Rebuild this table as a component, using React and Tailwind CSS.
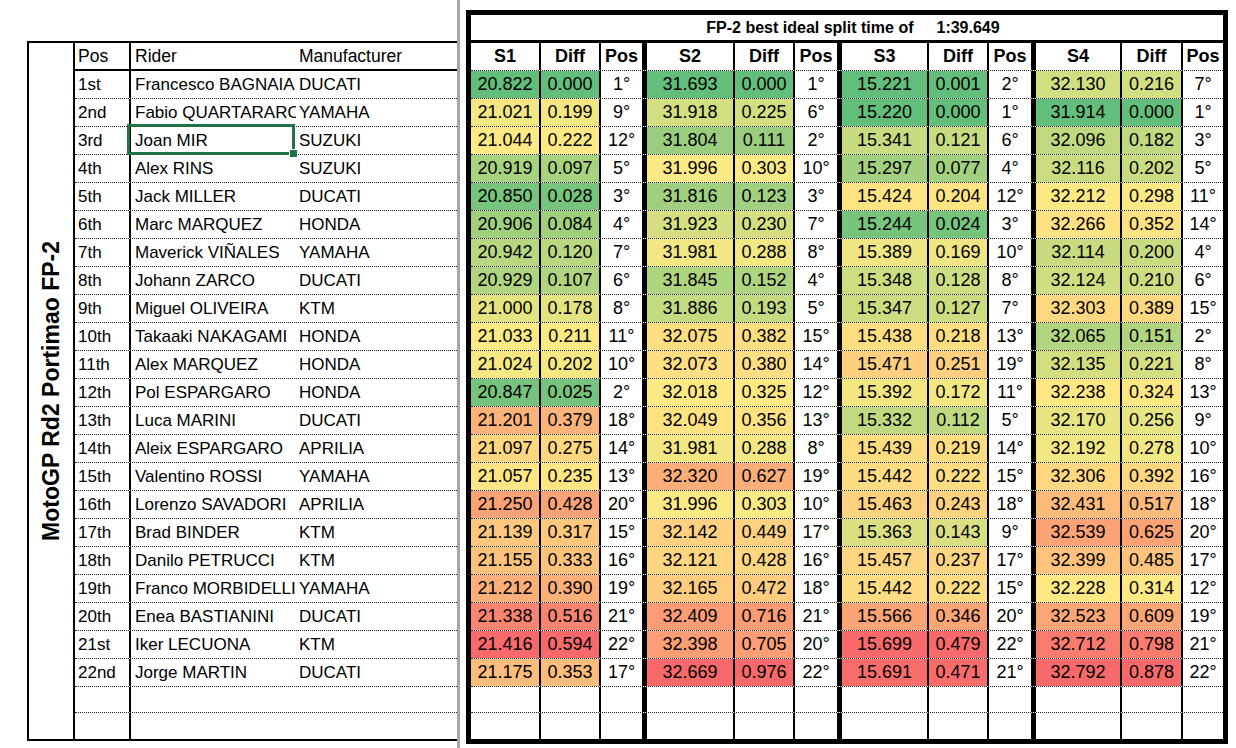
import React from 'react';

// FP-2 split times, one line per rider: pos|rider|maker|S1 diff pos|S2 ...|S3 ...|S4 ...
const RAW = [
  '1st|Francesco BAGNAIA|DUCATI|20.822 0.000 1|31.693 0.000 1|15.221 0.001 2|32.130 0.216 7',
  '2nd|Fabio QUARTARARO|YAMAHA|21.021 0.199 9|31.918 0.225 6|15.220 0.000 1|31.914 0.000 1',
  '3rd|Joan MIR|SUZUKI|21.044 0.222 12|31.804 0.111 2|15.341 0.121 6|32.096 0.182 3',
  '4th|Alex RINS|SUZUKI|20.919 0.097 5|31.996 0.303 10|15.297 0.077 4|32.116 0.202 5',
  '5th|Jack MILLER|DUCATI|20.850 0.028 3|31.816 0.123 3|15.424 0.204 12|32.212 0.298 11',
  '6th|Marc MARQUEZ|HONDA|20.906 0.084 4|31.923 0.230 7|15.244 0.024 3|32.266 0.352 14',
  '7th|Maverick VIÑALES|YAMAHA|20.942 0.120 7|31.981 0.288 8|15.389 0.169 10|32.114 0.200 4',
  '8th|Johann ZARCO|DUCATI|20.929 0.107 6|31.845 0.152 4|15.348 0.128 8|32.124 0.210 6',
  '9th|Miguel OLIVEIRA|KTM|21.000 0.178 8|31.886 0.193 5|15.347 0.127 7|32.303 0.389 15',
  '10th|Takaaki NAKAGAMI|HONDA|21.033 0.211 11|32.075 0.382 15|15.438 0.218 13|32.065 0.151 2',
  '11th|Alex MARQUEZ|HONDA|21.024 0.202 10|32.073 0.380 14|15.471 0.251 19|32.135 0.221 8',
  '12th|Pol ESPARGARO|HONDA|20.847 0.025 2|32.018 0.325 12|15.392 0.172 11|32.238 0.324 13',
  '13th|Luca MARINI|DUCATI|21.201 0.379 18|32.049 0.356 13|15.332 0.112 5|32.170 0.256 9',
  '14th|Aleix ESPARGARO|APRILIA|21.097 0.275 14|31.981 0.288 8|15.439 0.219 14|32.192 0.278 10',
  '15th|Valentino ROSSI|YAMAHA|21.057 0.235 13|32.320 0.627 19|15.442 0.222 15|32.306 0.392 16',
  '16th|Lorenzo SAVADORI|APRILIA|21.250 0.428 20|31.996 0.303 10|15.463 0.243 18|32.431 0.517 18',
  '17th|Brad BINDER|KTM|21.139 0.317 15|32.142 0.449 17|15.363 0.143 9|32.539 0.625 20',
  '18th|Danilo PETRUCCI|KTM|21.155 0.333 16|32.121 0.428 16|15.457 0.237 17|32.399 0.485 17',
  '19th|Franco MORBIDELLI|YAMAHA|21.212 0.390 19|32.165 0.472 18|15.442 0.222 15|32.228 0.314 12',
  '20th|Enea BASTIANINI|DUCATI|21.338 0.516 21|32.409 0.716 21|15.566 0.346 20|32.523 0.609 19',
  '21st|Iker LECUONA|KTM|21.416 0.594 22|32.398 0.705 20|15.699 0.479 22|32.712 0.798 21',
  '22nd|Jorge MARTIN|DUCATI|21.175 0.353 17|32.669 0.976 22|15.691 0.471 21|32.792 0.878 22',
];

const rows = RAW.map(line => {
  const [pos, rider, maker, ...sectors] = line.split('|');
  return { pos, rider, maker, sectors: sectors.map(s => s.split(' ')) };
});

// excel style 3 colour scale: min green, median yellow, max red
const GREEN = [99, 190, 123];
const YELLOW = [255, 235, 132];
const RED = [248, 105, 107];

const mix = (a, b, t) => a.map((v, i) => Math.round(v + (b[i] - v) * t));

const makeScale = values => {
  const nums = values.map(Number);
  const sorted = [...nums].sort((a, b) => a - b);
  const min = sorted[0];
  const max = sorted[sorted.length - 1];
  const n = sorted.length;
  const mid = n % 2 ? sorted[(n - 1) / 2] : (sorted[n / 2 - 1] + sorted[n / 2]) / 2;
  return v => {
    const x = Number(v);
    const c = x <= mid
      ? mix(GREEN, YELLOW, mid === min ? 0 : (x - min) / (mid - min))
      : mix(YELLOW, RED, (x - mid) / (max - mid));
    return `rgb(${c[0]}, ${c[1]}, ${c[2]})`;
  };
};

const scales = [0, 1, 2, 3].map(k => ({
  time: makeScale(rows.map(r => r.sectors[k][0])),
  diff: makeScale(rows.map(r => r.sectors[k][1])),
}));

const SECTOR_COLS = [
  ['w-[70px] border-r-2', 'w-[60px] border-r-2', 'w-[46px] border-r-[5px]'],
  ['w-[88px] border-r-2', 'w-[60px] border-r-2', 'w-[47px] border-r-[5px]'],
  ['w-[87px] border-r-2', 'w-[60px] border-r-2', 'w-[47px] border-r-[5px]'],
  ['w-[86px] border-r-2', 'w-[61px] border-r-2', 'w-[40px]'],
];

const cell = 'shrink-0 h-full flex items-center justify-center border-black';
const dotted = 'border-b border-dotted border-[#222]';

const LeftTable = () => (
  <div className="flex w-[430px] h-[700px] border-2 border-r-0 border-black text-[17px]">
    <div className="w-[46px] shrink-0 border-r-2 border-black flex items-center justify-center">
      <span className="[writing-mode:vertical-rl] rotate-180 font-bold text-[23px] whitespace-nowrap">
        MotoGP Rd2 Portimao FP-2
      </span>
    </div>
    <div className="flex-1 flex flex-col">
      <div className="flex h-[28px] border-b-2 border-black shrink-0 text-[17.5px]">
        <div className="w-[56px] shrink-0 border-r-2 border-black pl-[3px] flex items-center">Pos</div>
        <div className="w-[165px] shrink-0 pl-[4px] flex items-center">Rider</div>
        <div className="flex-1 pl-[3px] flex items-center">Manufacturer</div>
      </div>
      {rows.map((r, i) => (
        <div key={r.pos} className={`flex h-[28px] shrink-0 ${dotted}`}>
          <div className="w-[56px] shrink-0 border-r-2 border-black pl-[3px] flex items-center">{r.pos}</div>
          <div className="relative w-[165px] shrink-0 pl-[4px] flex items-center whitespace-nowrap">
            <span className="block overflow-hidden w-full">{r.rider}</span>
            {i === 2 && (
              <div className="absolute left-[-4px] top-[-3px] w-[168px] h-[31px] border-[3px] border-[#217346]">
                <div className="absolute right-[-6px] bottom-[-6px] w-[9px] h-[9px] bg-[#217346] border border-white" />
              </div>
            )}
          </div>
          <div className="flex-1 pl-[3px] flex items-center">{r.maker}</div>
        </div>
      ))}
      <div className={`h-[26px] shrink-0 flex ${dotted}`}>
        <div className="w-[56px] shrink-0 border-r-2 border-black" />
      </div>
      <div className="flex-1 flex">
        <div className="w-[56px] shrink-0 border-r-2 border-black" />
      </div>
    </div>
  </div>
);

const EmptyRow = ({ last }) => (
  <div className={`flex h-[26px] shrink-0 ${last ? '' : dotted}`}>
    {SECTOR_COLS.map((cols, k) => (
      <React.Fragment key={k}>
        {cols.map((w, j) => <div key={j} className={`${cell} ${w}`} />)}
      </React.Fragment>
    ))}
  </div>
);

const RightTable = () => (
  <div className="w-[762px] border-[5px] border-black flex flex-col text-[18px]">
    <div className="h-[28px] shrink-0 border-b-[3px] border-black flex items-center justify-center pl-[12px] font-bold text-[16px]">
      <span>FP-2 best ideal split time of</span>
      <span className="ml-[23px]">1:39.649</span>
    </div>
    <div className={`flex h-[28px] shrink-0 font-bold ${dotted}`}>
      {SECTOR_COLS.map((cols, k) => (
        <React.Fragment key={k}>
          <div className={`${cell} ${cols[0]}`}>S{k + 1}</div>
          <div className={`${cell} ${cols[1]}`}>Diff</div>
          <div className={`${cell} ${cols[2]}`}>Pos</div>
        </React.Fragment>
      ))}
    </div>
    {rows.map(r => (
      <div key={r.pos} className={`flex h-[28px] shrink-0 ${dotted}`}>
        {r.sectors.map(([time, diff, pos], k) => (
          <React.Fragment key={k}>
            <div className={`${cell} ${SECTOR_COLS[k][0]}`} style={{ backgroundColor: scales[k].time(time) }}>{time}</div>
            <div className={`${cell} ${SECTOR_COLS[k][1]}`} style={{ backgroundColor: scales[k].diff(diff) }}>{diff}</div>
            <div className={`${cell} ${SECTOR_COLS[k][2]}`}>{pos}°</div>
          </React.Fragment>
        ))}
      </div>
    ))}
    <EmptyRow />
    <EmptyRow last />
  </div>
);

export default function App() {
  return (
    <div className="flex w-[1236px] h-[748px] overflow-hidden bg-white text-black font-['Liberation_Sans',Arial,sans-serif]">
      <div className="w-[457px] shrink-0 pl-[27px] pt-[41px]">
        <LeftTable />
      </div>
      <div className="w-[3px] shrink-0 bg-[#a6a6a6]" />
      <div className="pl-[6px] pt-[10px]">
        <RightTable />
      </div>
    </div>
  );
}
